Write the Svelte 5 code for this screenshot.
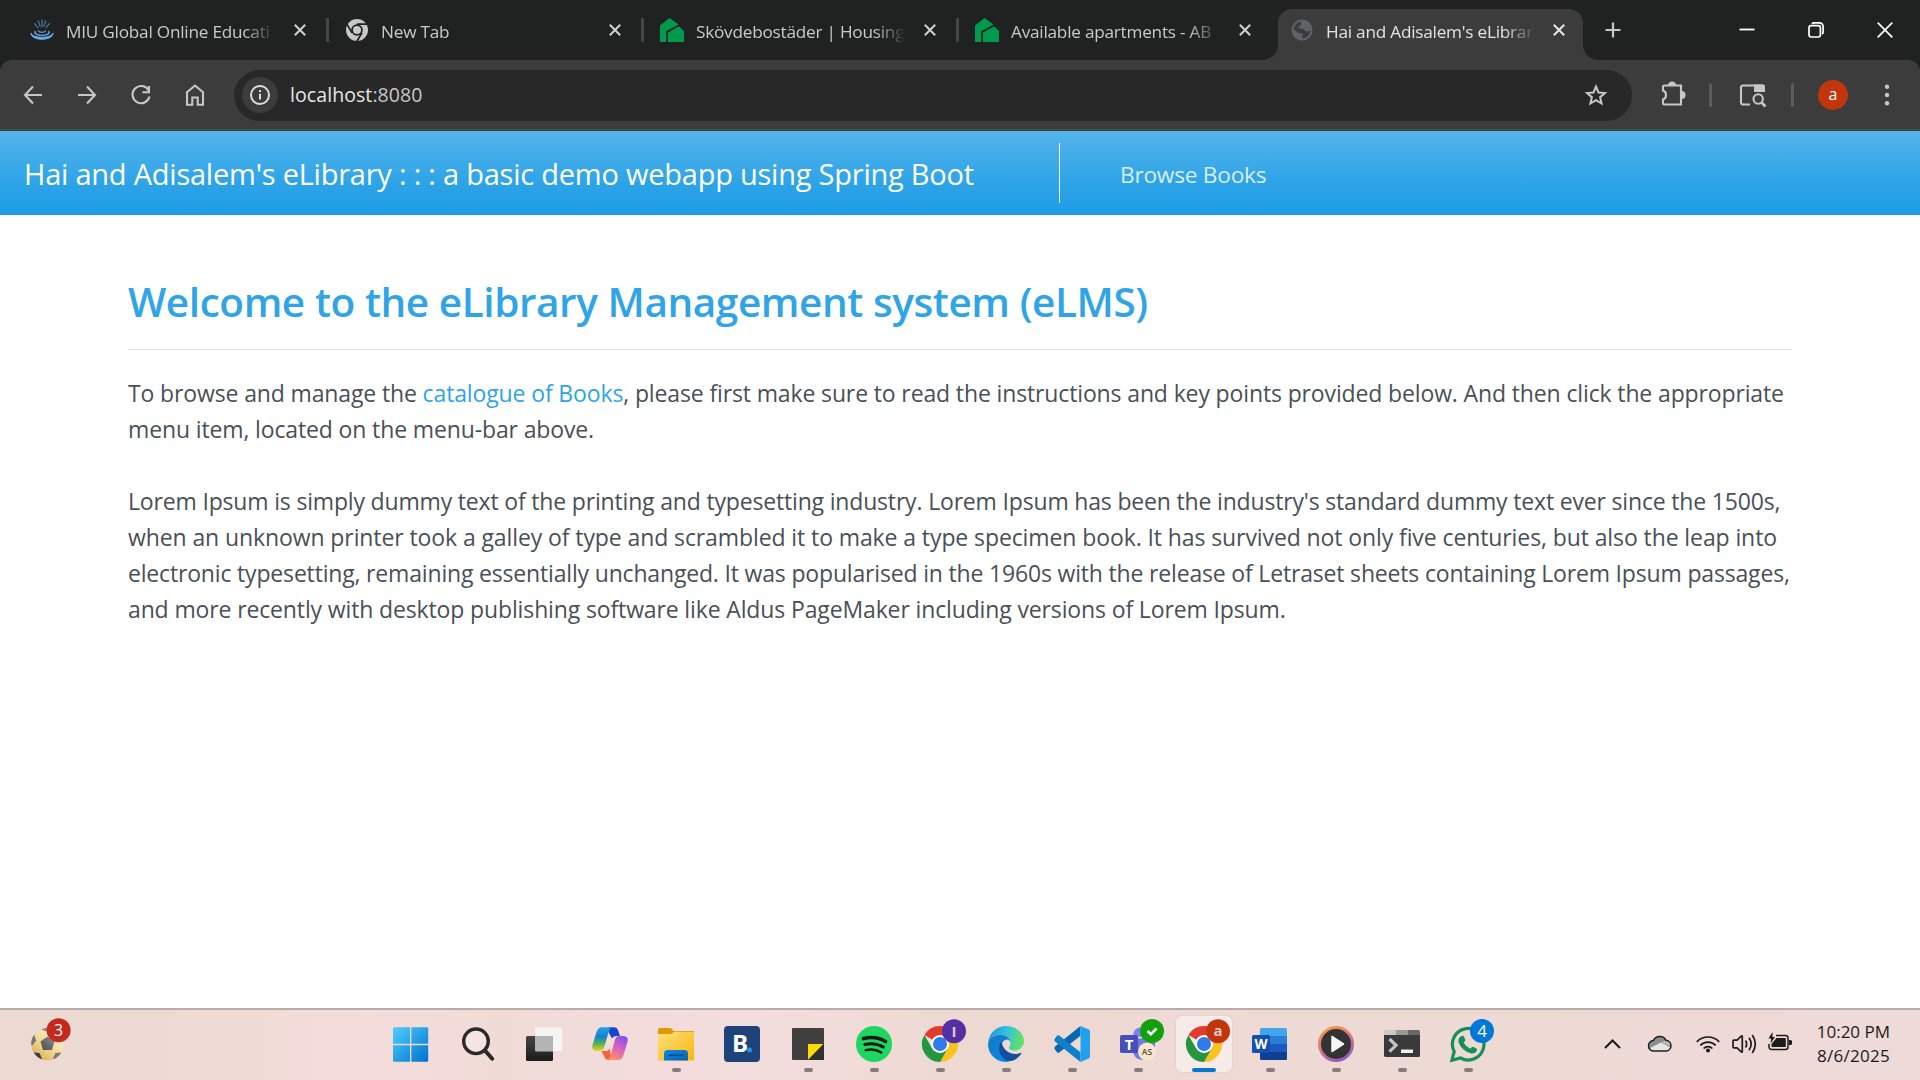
<script>
  const tabs = [
    { title: 'MIU Global Online Educati', icon: 'fountain', pos: 'first' },
    { title: 'New Tab', icon: 'chrome', pos: '' },
    { title: 'Skövdebostäder | Housing', icon: 'house', pos: '' },
    { title: 'Available apartments - AB', icon: 'house', pos: 'last' },
    { title: "Hai and Adisalem's eLibrar", icon: 'globe', pos: 'active' }
  ];

  const lorem = [
    { cls: 'snug', text: "Lorem Ipsum is simply dummy text of the printing and typesetting industry. Lorem Ipsum has been the industry's standard dummy text ever since the 1500s," },
    { cls: 'wide', text: 'when an unknown printer took a galley of type and scrambled it to make a type specimen book. It has survived not only five centuries, but also the leap into' },
    { cls: 'snug', text: 'electronic typesetting, remaining essentially unchanged. It was popularised in the 1960s with the release of Letraset sheets containing Lorem Ipsum passages,' },
    { cls: 'mid', text: 'and more recently with desktop publishing software like Aldus PageMaker including versions of Lorem Ipsum.' }
  ];

  const apps = [
    { id: 'windows', running: false },
    { id: 'search', running: false },
    { id: 'taskview', running: false },
    { id: 'copilot', running: false },
    { id: 'explorer', running: true },
    { id: 'booking', running: false },
    { id: 'sticky', running: true },
    { id: 'spotify', running: true },
    { id: 'chromeI', running: true },
    { id: 'edge', running: true },
    { id: 'vscode', running: true },
    { id: 'teams', running: true },
    { id: 'chromeA', running: true, focused: true },
    { id: 'word', running: true },
    { id: 'media', running: true },
    { id: 'terminal', running: true },
    { id: 'whatsapp', running: true }
  ];
</script>

{#snippet chromeLogo()}
  <path d="M18 18 2.4 9A18 18 0 0 1 33.6 9L18 9Z" fill="#e33b2e" />
  <path d="M18 9H33.6A18 18 0 0 1 18 36L25.8 22.5Z" fill="#fcc31e" />
  <path d="M2.4 9A18 18 0 0 0 18 36L25.8 22.5 18 27 10.2 22.5Z" fill="#25963f" />
  <circle cx="18" cy="18" r="9" fill="#fff" />
  <circle cx="18" cy="18" r="7" fill="#2f7bed" />
{/snippet}

{#snippet closeX()}
  <svg class="close" viewBox="0 0 12 12"><path d="M.8.8 11.2 11.2M11.2.8.8 11.2" /></svg>
{/snippet}

<div class="screen">
  <header class="strip">
    <div class="tabs">
      {#each tabs as tab}
        <div class="tab {tab.pos}">
          <svg class="favicon" viewBox="0 0 24 24">
            {#if tab.icon === 'fountain'}
              <g fill="none" stroke="#5b9fd8" stroke-linecap="round">
                <path d="M12 1.500V9M8.200 2.800l2 5.500M15.800 2.800l-2 5.500M4.600 5.600l3.400 4M19.400 5.600l-3.400 4" stroke-width="1.100" opacity=".75" />
                <path d="M8.500 13c1 1.800 6 1.800 7 0" stroke-width="1.500" />
                <path d="M5 13.500c-1.600 5.200 15.600 5.200 14 0" stroke-width="1.400" stroke="#66aeea" />
              </g>
              <path d="M1 15C.5 23.300 23.500 23.300 23 15c-.6 5.800-21.400 5.800-22 0Z" fill="#66aeea" stroke="#66aeea" />
            {:else if tab.icon === 'chrome'}
              <circle cx="12" cy="12" r="11" fill="#c7c7c7" />
              <circle cx="12" cy="12" r="5.800" fill="#202221" />
              <circle cx="12" cy="12" r="4" fill="#c7c7c7" />
              <path d="M12 6.200H22.500M7 14.900 1.800 5.900M17 14.900 11.800 23.500" stroke="#202221" stroke-width="1.700" />
            {:else if tab.icon === 'house'}
              <path d="M0 7.500 9.500 0 18.500 6.500 6.200 13.200V24H0Z" fill="#009a4e" />
              <path d="M8 14.500 19 8.300 24 13V24H8Z" fill="#009a4e" />
            {:else}
              <circle cx="12" cy="12" r="10.500" fill="#5f6368" />
              <path d="M12.500 3.600c-1.600.2-2 1.200-1.600 2.500.5 1.500-2.200 1.600-2.400 3-.3 1.700 2.400 1.600 4.500 1.900 2 .3 1.500 2.300 3.600 2.400 1.700.1 3.500-.3 3.900-1.600C20 17 17 20.400 12.600 20.500c-.9-1.600.3-2.500.2-3.900-.1-1.500-2.800-1-4.700-1.800-1.600-.7-1.800-2.600-4.500-3C3.800 7.400 7.600 3.400 12.500 3.600Z" fill="#393b3e" />
              <path d="M15 4.300c2.300 1 4.200 2.900 4.900 5.400-1.800-.4-2.400 1-3.900.1-1.200-.8-.1-1.800-1.700-2.400-1.400-.6-.6-2.200.7-3.100Z" fill="#5f6368" />
            {/if}
          </svg>
          <span class="title">{tab.title}</span>
          {@render closeX()}
        </div>
      {/each}
    </div>
    <svg class="plus" viewBox="0 0 16 16"><path d="M8 .5v15M.5 8h15" /></svg>
    <div class="controls">
      <svg viewBox="0 0 16 16"><path d="M.5 7.500h15" stroke-width="1.800" /></svg>
      <svg viewBox="0 0 16 16"><rect x="1" y="3.600" width="11.400" height="11.400" rx="2.200" /><path d="M4 1.900Q4.600.9 6 .9h5Q15.100.9 15.100 5v5q0 1.500-1 2.100" /></svg>
      <svg viewBox="0 0 16 16"><path d="M.7.700 15.300 15.300M15.300.7.700 15.300" /></svg>
    </div>
  </header>

  <div class="toolwrap">
    <div class="toolbar">
      <svg class="tool" viewBox="0 0 24 24"><path d="M21 12H4.500M12 3.500 4 12l8 8.500" /></svg>
      <svg class="tool" viewBox="0 0 24 24"><path d="M3 12h16.500M12 3.500 20 12l-8 8.500" /></svg>
      <svg class="tool" viewBox="0 0 24 24"><path d="M19.700 7.500A8.600 8.600 0 1 0 20.500 13.500M20 3v6.300h-6.600" /></svg>
      <svg class="tool" viewBox="0 0 24 24"><path d="M4 21.700V9.200L12 2.500l8 6.700v12.500h-5.300v-7.200H9.300v7.200Z" /></svg>
      <div class="omnibox">
        <span class="info">
          <svg viewBox="0 0 22 22"><circle cx="11" cy="11" r="9" /><path d="M11 9.800v5.700M11 6v2.100" /></svg>
        </span>
        <span class="url">localhost<b>:8080</b></span>
        <svg class="star" viewBox="0 0 24 24"><path d="m12 3.500 2.500 6 6.500.5-4.900 4.200 1.500 6.300-5.600-3.400-5.600 3.400 1.500-6.300L3 10l6.500-.5Z" /></svg>
      </div>
      <svg class="tool puzzle" viewBox="0 0 26 26"><path d="M4 4.500h17v19H4a1.500 1.500 0 0 1-1-1.500v-3.500c4-1 4-8 0-9V6a1.500 1.500 0 0 1 1-1.500Z" /><path d="M9 4a3 3 0 0 1 6 0ZM22 11a3 3 0 0 1 0 6Z" class="solid" /><path d="M9 4.500a3 3 0 0 1 6 0M21.500 11a3 3 0 0 1 0 6" /></svg>
      <i class="sep"></i>
      <svg class="tool lens" viewBox="0 0 27 24"><path d="M11 21.500H4A2 2 0 0 1 2 19.500v-15a2 2 0 0 1 2-2h20" /><path d="M15 1.500h9.500A1.800 1.800 0 0 1 26 3.200V9H15Z" class="solid" /><circle cx="19.200" cy="16" r="4.700" /><path d="m22.500 19.500 4 4" stroke-width="2.600" /></svg>
      <i class="sep"></i>
      <span class="avatar">a</span>
      <svg class="tool dots" viewBox="0 0 24 24"><circle cx="12" cy="3.700" r="2.200" /><circle cx="12" cy="12" r="2.200" /><circle cx="12" cy="20.300" r="2.200" /></svg>
    </div>
  </div>

  <nav class="navbar">
    <span class="brand">Hai and Adisalem's eLibrary : : : a basic demo webapp using Spring Boot</span>
    <span class="rule"></span>
    <span class="navlink">Browse Books</span>
  </nav>

  <main>
    <h1>Welcome to the eLibrary Management system (eLMS)</h1>
    <p>
      <span class="line mid">To browse and manage the <a href="#books">catalogue of Books</a>, please first make sure to read the instructions and key points provided below. And then click the appropriate</span>
      <span class="line mid">menu item, located on the menu-bar above.</span>
    </p>
    <p>
      {#each lorem as l}<span class="line {l.cls}">{l.text}</span>{/each}
    </p>
  </main>

  <footer class="taskbar">
    <svg class="widget" viewBox="0 0 42 44">
      <defs>
        <linearGradient id="ball" x1="0" y1="1" x2=".8" y2="0"><stop offset="0" stop-color="#cf9c3e" /><stop offset=".5" stop-color="#f0d794" /><stop offset="1" stop-color="#fffbe8" /></linearGradient>
        <linearGradient id="patch" x1="0" y1="1" x2="1" y2="0"><stop offset="0" stop-color="#4c4c4c" /><stop offset="1" stop-color="#8d8d8d" /></linearGradient>
        <clipPath id="ballclip"><circle cx="17.500" cy="26" r="16.300" /></clipPath>
      </defs>
      <g clip-path="url(#ballclip)">
        <rect y="9" width="35" height="35" fill="url(#ball)" />
        <path d="m17.500 18.500 7 5-2.500 8.500h-9L10.500 23.500Z" fill="url(#patch)" />
        <path d="M0 15.500l4 .5 2 6.500L3 27H0Z" fill="#777" />
        <path d="M3.500 34.500l6 .5 2.500 6-2 3Z" fill="#3f3f3f" />
        <path d="M32 34.500l-6.500.5-2.500 5.500 2 3 8-5Z" fill="#777" />
        <path d="M11 11.500l5.500 2 5-2-4-2.500Z" fill="#888" />
      </g>
      <circle cx="28.600" cy="12.300" r="12" fill="#c4291d" />
      <text x="28.600" y="18" class="badge">3</text>
    </svg>

    <div class="apps">
      {#each apps as app}
        <div class="app" class:focused={app.focused}>
          <svg class="appicon" viewBox="0 0 36 36">
            {#if app.id === 'windows'}
              <defs><linearGradient id="win" gradientUnits="userSpaceOnUse" x1="-1" y1="1" x2="34" y2="36"><stop offset="0" stop-color="#4fd0fd" /><stop offset="1" stop-color="#0071d2" /></linearGradient></defs>
              <path d="M-1 2.500q0-1.200 1.200-1.200H16v16.400H-1ZM17.300 1.300H33q1.200 0 1.200 1.200v15.200H17.300ZM-1 19.200H16v16.600H.2Q-1 35.800-1 34.600ZM17.300 19.200h16.900v15.400q0 1.200-1.200 1.200H17.300Z" fill="url(#win)" />
            {:else if app.id === 'search'}
              <circle cx="16" cy="15.300" r="12.300" fill="#fff" fill-opacity=".25" stroke="#2a2a2a" stroke-width="3.400" />
              <path d="m25 24.500 7.200 8.200" stroke="#2a2a2a" stroke-width="4" stroke-linecap="round" />
            {:else if app.id === 'taskview'}
              <defs><linearGradient id="tv" x1="0" y1="0" x2="0" y2="1"><stop offset="0" stop-color="#454545" /><stop offset="1" stop-color="#1c1c1c" /></linearGradient></defs>
              <rect x="0" y="10" width="27" height="25" rx="1.500" fill="url(#tv)" />
              <rect x="9" y="1.300" width="27" height="24" rx="1.500" fill="#f4f4f4" />
              <path d="M9 10h18v15.300H10.500A1.500 1.500 0 0 1 9 23.800Z" fill="#b4b4b4" />
            {:else if app.id === 'copilot'}
              <defs>
                <linearGradient id="cpA" x1="0" y1="0" x2="0" y2="1"><stop offset="0" stop-color="#20a5ee" /><stop offset=".4" stop-color="#1681cf" /><stop offset=".7" stop-color="#56b257" /><stop offset="1" stop-color="#f3cf20" /></linearGradient>
                <linearGradient id="cpB" x1=".7" y1="0" x2=".2" y2="1"><stop offset="0" stop-color="#8650f0" /><stop offset=".5" stop-color="#df65b7" /><stop offset="1" stop-color="#ff985e" /></linearGradient>
              </defs>
              <path d="M16 1.200h6.500Q25 1.200 26 4l2 6h-4q-3 0-4 2.500L17 7Z" fill="#1746cc" />
              <path d="M20 34h-3.500q-3 0-4-3L9.500 25H14q2.500 0 3.500-2.500Z" fill="#f26538" />
              <path d="M10 1.200h10q-2 0-3 3.500l-4.800 16.500Q11 25 7 25H5q-6 0-4.500-6L4.500 6Q6 1.200 10 1.200Z" fill="url(#cpA)" />
              <path d="M26 34H15q2.500 0 3.500-4L23 13.500Q24 10 28 10h3q6 0 4.500 6L31.500 29Q30 34 26 34Z" fill="url(#cpB)" />
            {:else if app.id === 'explorer'}
              <defs>
                <linearGradient id="fold" x1="0" y1="0" x2="1" y2="1"><stop offset="0" stop-color="#ffdf7d" /><stop offset="1" stop-color="#f9b70b" /></linearGradient>
                <linearGradient id="foldb" x1="0" y1="0" x2="1" y2="1"><stop offset="0" stop-color="#128bdb" /><stop offset="1" stop-color="#0860b4" /></linearGradient>
              </defs>
              <path d="M0 3.500Q0 2 1.500 2h10q1.500 0 2.500 1.200L15.500 5H36v5H0Z" fill="#dd9a05" />
              <path d="M0 8h12.500q1.500 0 2.500-1.300l.8-1h20.200V34.500H0Z" fill="url(#fold)" />
              <path d="M6 34.500V27.500Q6 24 9.500 24h17q3.500 0 3.500 3.500v7Z" fill="url(#foldb)" />
              <path d="M11 29.300h14" stroke="#064b8e" stroke-width="1.600" stroke-linecap="round" />
            {:else if app.id === 'booking'}
              <rect x="0" y="0" width="36" height="36" rx="4" fill="#1e437a" />
              <text x="8" y="25.800" class="bk">B</text>
              <circle cx="25.500" cy="24" r="2.500" fill="#119ade" />
            {:else if app.id === 'sticky'}
              <path d="M2 3q0-1 1-1h30q1 0 1 1v31H3q-1 0-1-1Z" fill="#404040" />
              <path d="M18 18h15.500L18 34Z" fill="#fddb00" />
              <path d="M33.500 18 18 34h16V18Z" fill="#303030" />
            {:else if app.id === 'spotify'}
              <circle cx="18" cy="18" r="18" fill="#1ed760" />
              <g fill="none" stroke="#151a17" stroke-linecap="round"><path d="M7.500 12.500q12.500-3 22 3" stroke-width="3.700" /><path d="M8.800 18.500q10.200-2.600 18.500 2.600" stroke-width="3" /><path d="M9.800 24.200q8.500-2.200 15.400 2.200" stroke-width="2.400" /></g>
            {:else if app.id === 'chromeI'}
              {@render chromeLogo()}
              <circle cx="32" cy="5.200" r="12" fill="#5530a5" />
              <text x="32" y="10.500" class="badge soft">I</text>
            {:else if app.id === 'edge'}
              <defs>
                <linearGradient id="edA" x1="0" y1=".3" x2="1" y2=".5"><stop offset="0" stop-color="#1f93d8" /><stop offset=".5" stop-color="#33c3dc" /><stop offset="1" stop-color="#67e35a" /></linearGradient>
                <linearGradient id="edB" x1="0" y1="0" x2=".6" y2="1"><stop offset="0" stop-color="#1579c6" /><stop offset="1" stop-color="#0a86e0" /></linearGradient>
              </defs>
              <path d="M0 17C1 7 8.500 0 18 0c10 0 18 7 18 15.500 0 5.500-4.500 9-9.500 9-3.500 0-5.500-1.200-5.500-2.500 0-1.200 1.500-1.800 1.500-5 0-3.500-4-8-10.500-8C6 9 1.500 12.500 0 17Z" fill="url(#edA)" />
              <path d="M0 18C1 12 6.500 9 12 9c6 0 10.500 3.500 10.500 8 0-2.500-2.500-3.800-4.500-3.300-3.500 1-5 4.500-4.500 8.300.8 6 6 8.500 8 13.500C9.500 38 0 29 0 18Z" fill="url(#edB)" />
              <path d="M14 14.800C10.500 19 10 25 13.500 30c2.500 3.600 6.500 5.600 9.500 5 4.500-1 8-3.800 10.200-7.200.5-.8-.3-1.300-1-.9-2.200 1-5.700 1.600-9.200.4-5.500-1.800-9.500-6.800-9-12.500Z" fill="#124f9c" />
            {:else if app.id === 'vscode'}
              <path d="M1 23.500Q-.5 22 1 20.500L26.500 0v9.700L5.200 26.500q-1 .7-2 0Z" fill="#0868b0" />
              <path d="M1 12.500q-1.500 1.500 0 3L26.500 36v-9.700L5.200 9.500q-1-.7-2 0Z" fill="#0e7fc8" />
              <path d="M26.500 0 34.800 3.600Q36 4.200 36 5.500v25q0 1.300-1.200 1.900L26.500 36Z" fill="#22a1ee" />
            {:else if app.id === 'teams'}
              <circle cx="20" cy="8" r="6.500" fill="#7b83eb" />
              <path d="M13 12h22v10q0 12-11 12-11 0-11-11Z" fill="#7078e2" />
              <path d="M17 11.500h13" stroke="#f3e9f2" stroke-width="1.600" />
              <rect x="0" y="9" width="18" height="18" rx="1.800" fill="#474fb8" />
              <text x="9" y="23.600" class="tt">T</text>
              <circle cx="32" cy="5" r="12" fill="#12a010" />
              <path d="m27.500 5 3.300 3.200 5.800-5.700" stroke="#fff" stroke-width="2.600" fill="none" />
              <circle cx="27" cy="25.600" r="9" fill="#f7e7cd" />
              <text x="27" y="28.500" class="initials">AS</text>
            {:else if app.id === 'chromeA'}
              {@render chromeLogo()}
              <circle cx="32" cy="5.200" r="12" fill="#c1360c" />
              <text x="32" y="10" class="badge soft">a</text>
            {:else if app.id === 'word'}
              <path d="M8 3.500Q8 2 9.500 2h24Q35 2 35 3.500V10H8Z" fill="#41a5ee" />
              <path d="M8 10h27v8H8Z" fill="#2b7cd3" />
              <path d="M8 18h27v8H8Z" fill="#185abd" />
              <path d="M8 26h27v6.500q0 1.500-1.500 1.500h-24Q8 34 8 32.500Z" fill="#103f91" />
              <rect x="0" y="9" width="18" height="18" rx="1.500" fill="#1450b0" />
              <text x="9" y="23" class="ww">W</text>
            {:else if app.id === 'media'}
              <defs><linearGradient id="med" x1=".2" y1="0" x2=".7" y2="1"><stop offset="0" stop-color="#ff9b45" /><stop offset=".5" stop-color="#d47586" /><stop offset="1" stop-color="#8958c4" /></linearGradient></defs>
              <circle cx="18" cy="18" r="18" fill="url(#med)" />
              <circle cx="18" cy="18" r="15" fill="#333" />
              <path d="M14 10.500v15L25.500 18Z" fill="#f5f5f5" stroke="#f5f5f5" stroke-width="1.500" stroke-linejoin="round" />
            {:else if app.id === 'terminal'}
              <path d="M0 5.500Q0 4 1.500 4H12v5H0Z" fill="#c9c9c9" />
              <path d="M12 4h12v5H12Z" fill="#989898" />
              <path d="M24 4h10.500Q36 4 36 5.500V9H24Z" fill="#686868" />
              <path d="M0 9h36v20.500q0 1.500-1.500 1.500h-33Q0 31 0 29.500Z" fill="#3a3a3a" />
              <path d="m5.500 13 6.500 6.300-6.500 6.300" fill="none" stroke="#c4c4c4" stroke-width="3.200" />
              <rect x="17" y="23.500" width="12" height="3.500" fill="#f2f2f2" />
            {:else}
              <path d="M2 34.200 4.200 25.500A15.800 15.800 0 1 1 10.500 32Z" fill="none" stroke="#178f5c" stroke-width="3.200" />
              <path d="M11.500 10q1.800-.8 2.500.8l1.300 3q.4 1-1.600 3 2.500 4.200 6.600 6 1.800-2.300 2.700-2l3.500 1.700q1 .7.200 2.500-2 3.300-6 2.300-9-2.500-12-10.500-1.300-4.500 2.800-6.800Z" fill="#178f5c" />
              <circle cx="32" cy="5" r="12" fill="#0078d7" />
              <text x="32" y="11.200" class="badge four">4</text>
            {/if}
          </svg>
          {#if app.running}<i class="pill"></i>{/if}
        </div>
      {/each}
    </div>

    <div class="tray">
      <svg class="chev" viewBox="0 0 17 10"><path d="m1 9 7.500-7.500L16 9" /></svg>
      <svg class="cloud" viewBox="0 0 24 17"><path d="M6 16a5.200 5.200 0 0 1-.6-10.400A7 7 0 0 1 18 5.300 5.400 5.400 0 0 1 18.500 16Z" fill="#8d8d8d" /><path d="M2 13 13 7.500 22.500 12.500Q21 16 18.500 16H6q-3 0-4-3Z" fill="#e6e6e6" /><path d="M13 7.500 18 5.300q5 .7 5 6.200Z" fill="#b9b9b9" /><path d="M6 16a5.200 5.200 0 0 1-.6-10.400A7 7 0 0 1 18 5.300 5.400 5.400 0 0 1 18.500 16Z" fill="none" stroke="#222" stroke-width="1.500" /></svg>
      <svg class="wifi" viewBox="0 0 24 18"><path d="M.8 6.800a15.500 15.500 0 0 1 22.400 0M4.300 10.300a10.700 10.700 0 0 1 15.400 0M7.700 13.500a6 6 0 0 1 8.600 0" /><circle cx="12" cy="15.500" r="2" fill="#1b1b1b" stroke="none" /></svg>
      <svg class="vol" viewBox="0 0 24 20"><path d="M1 7v6q0 .8.800.8H5l4.500 4.200q.8.500.8-.5V2.500q0-1-.8-.5L5 6.200H1.800Q1 6.200 1 7ZM13.500 6.500q2.300 3.500 0 7M17 3.800q4.300 6.200 0 12.400M20.300 1q6 9 0 18" /></svg>
      <svg class="batt" viewBox="0 0 24 19"><path d="M8 3.500h9.500A2.500 2.500 0 0 1 20 6v9a2.500 2.500 0 0 1-2.500 2.500h-14A2.500 2.500 0 0 1 1 15v-3" fill="none" stroke="#1b1b1b" stroke-width="1.500" /><path d="M8.500 6H17q.8 0 .8.800v7.500q0 .8-.8.800H4.300q-.8 0-.8-.8V12Z" fill="#1b1b1b" /><path d="M21 8h1.500q1.500 0 1.500 1.500v2q0 1.500-1.500 1.500H21ZM4.500 0 .5 6.500h2.700L2.500 11.500 7 5H4.500Z" fill="#1b1b1b" /></svg>
      <div class="clock"><span>10:20 PM</span><span class="date">8/6/2025</span></div>
    </div>
  </footer>
</div>

<style>
  :global(body) { margin: 0; background: #fff; }
  .screen { width: 1920px; height: 1080px; display: flex; flex-direction: column; overflow: hidden; background: #fff; font-family: "Open Sans", "Noto Sans", sans-serif; }
  svg { display: block; flex: none; overflow: visible; }

  .strip { height: 60px; flex: none; display: flex; align-items: center; background: #202221; box-sizing: border-box; }
  .tabs { display: flex; align-self: stretch; align-items: flex-end; padding-left: 18px; }
  .tab { position: relative; width: 305px; height: 51px; margin-right: 10px; display: flex; align-items: center; box-sizing: border-box; padding: 0 18px 9px 12px; color: #c9c9c9; }
  .tab::after { content: ""; position: absolute; right: -6px; top: 9px; width: 3px; height: 24px; border-radius: 1px; background: #454746; }
  .tab.last::after { display: none; }
  .favicon { width: 24px; height: 24px; }
  .title { width: 216px; margin-left: 12px; white-space: nowrap; font-size: 17.200px; line-height: 24px; letter-spacing: -0.230px; padding-top: 4px; -webkit-mask-image: linear-gradient(90deg, #000 178px, transparent 210px); mask-image: linear-gradient(90deg, #000 178px, transparent 210px); }
  .close { width: 12px; height: 12px; margin-left: auto; stroke: #d0d0d0; stroke-width: 2; margin-right: -1px; }
  .tab.active { margin-right: 0; background: #3c3c3c; border-radius: 14px 14px 0 0; color: #e3e3e3; }
  .tab.active::before, .tab.active::after { content: ""; display: block; position: absolute; top: auto; bottom: 0; width: 15px; height: 15px; border-radius: 0; }
  .tab.active::before { left: -15px; background: radial-gradient(circle at 0 0, transparent 14.500px, #3c3c3c 15.200px); }
  .tab.active::after { right: -15px; background: radial-gradient(circle at 100% 0, transparent 14.500px, #3c3c3c 15.200px); }
  .tab.active .close { stroke: #e6e6e6; margin-right: 0; }
  .plus { width: 16px; height: 16px; margin-left: 22px; stroke: #c7c7c7; stroke-width: 2.200; }
  .controls { margin-left: auto; display: flex; gap: 53px; padding-right: 27px; }
  .controls svg { width: 16px; height: 16px; fill: none; stroke: #fff; stroke-width: 1.700; }

  .toolwrap { height: 71px; flex: none; background: #202221; }
  .toolbar { height: 71px; box-sizing: border-box; border-radius: 12px 12px 0 0; background: linear-gradient(#3c3c3c 69px, #4b4b4b 69px, #4b4b4b 70px, #3c3c3c 70px); display: flex; align-items: center; padding: 0 21px; }
  .tool { width: 24px; height: 24px; margin: 0 30px 2px 0; fill: none; stroke: #c7c7c7; stroke-width: 2.100; }
  .solid { fill: #c7c7c7; stroke: none; }
  .omnibox { width: 1398px; height: 51px; margin: -1px 28px 0 -3px; border-radius: 26px; background: #282828; display: flex; align-items: center; box-sizing: border-box; padding: 0 24px 0 8px; }
  .info { width: 36px; height: 36px; border-radius: 50%; background: #3c3c3c; display: grid; place-items: center; }
  .info svg { width: 22px; height: 22px; fill: none; stroke: #dcdcdc; stroke-width: 2; }
  .url { margin-left: 12px; font-size: 19.500px; line-height: 28px; letter-spacing: 0.080px; color: #e6e6e6; }
  .url b { font-weight: 400; color: #c7c7c7; }
  .star { width: 24px; height: 24px; margin-left: auto; fill: none; stroke: #c7c7c7; stroke-width: 2; }
  .puzzle { width: 26px; height: 26px; margin: 0 23px 3px 0; }
  .sep { width: 3px; height: 24px; margin-bottom: 1px; border-radius: 2px; background: #5c5c5c; flex: none; }
  .lens { width: 27px; margin: 0 25px 1px 27px; }
  .avatar { width: 30px; height: 30px; margin: 0 27px 1px 24px; border-radius: 50%; background: #c1360c; color: #fff; font-size: 16px; line-height: 28px; text-align: center; flex: none; }
  .dots { fill: #c7c7c7; stroke: none; margin: 0 0 1px; }

  .navbar { height: 84px; flex: none; display: flex; align-items: center; box-sizing: border-box; padding-left: 24px; background: linear-gradient(#54b4eb, #2fa4e7 60%, #1d9ce5); color: #fff; white-space: nowrap; }
  .brand { width: 1035px; font-size: 29px; line-height: 42px; padding-top: 2px; letter-spacing: -0.230px; }
  .rule { width: 1px; height: 60px; background: #fff; }
  .navlink { margin-left: 60px; padding-top: 3px; font-size: 22.700px; line-height: 36px; letter-spacing: -0.250px; color: #d8eefb; }

  main { flex: 1; padding: 62px 128px 0; color: #495057; }
  h1 { margin: 0 0 25px; height: 73px; box-sizing: border-box; border-bottom: 1px solid #e1e1e1; font-size: 40.500px; font-weight: 600; line-height: 50px; letter-spacing: -0.420px; color: #2fa4e7; white-space: nowrap; }
  p { margin: 0 0 36px; font-size: 23px; line-height: 36px; }
  .line { display: block; white-space: nowrap; }
  .mid { letter-spacing: -0.133px; }
  .snug { letter-spacing: -0.174px; }
  .wide { letter-spacing: -0.098px; }
  a { color: #2fa4e7; text-decoration: none; }

  .taskbar { position: relative; height: 72px; flex: none; box-sizing: border-box; border-top: 2px solid #b9abaa; display: flex; background: linear-gradient(90deg, #ecd9d2 0, #eedad4 8%, #f4dcda 19%, #f1dbd7 26%, #f4dddd 39%, #ecd9d1 52%, #efdad5 62%, #eddad4 76%, #eed9d6 90%, #eedbd9 100%); }
  .widget { width: 42px; height: 44px; margin: 8px 0 0 30px; }
  .badge { font-size: 16px; fill: #fff; text-anchor: middle; }
  .soft { font-size: 15px; font-weight: 700; fill: #e3c6c8; }
  .four { font-size: 17px; }
  .bk { font-size: 24px; font-weight: 700; fill: #fff; }
  .tt { font-size: 15px; font-weight: 700; fill: #fff; text-anchor: middle; }
  .ww { font-size: 13.500px; font-weight: 700; fill: #fff; text-anchor: middle; }
  .initials { font-size: 8.500px; font-weight: 600; fill: #5b4630; text-anchor: middle; }
  .apps { display: flex; margin-left: 307px; }
  .app { width: 56px; height: 56px; margin: 6px 5px 0; border-radius: 6px; display: flex; flex-direction: column; align-items: center; padding-top: 10px; box-sizing: border-box; }
  .appicon { width: 36px; height: 36px; }
  .pill { width: 9px; height: 5px; margin-top: 6px; border-radius: 3px; background: #877c7b; }
  .focused { background: #f7ebe9; box-shadow: 0 0 0 1px #e6d3d0; }
  .focused .pill { width: 24px; background: #0078d4; }

  .tray { margin-left: auto; height: 67px; padding-right: 30px; display: flex; align-items: center; }
  .tray svg { fill: none; stroke: #1b1b1b; stroke-width: 1.700; }
  .tray .chev { width: 17px; height: 10px; margin-right: 27px; stroke-width: 2; }
  .tray .cloud { width: 24px; height: 17px; margin-right: 24px; stroke: none; }
  .wifi { width: 24px; height: 18px; margin-right: 12px; }
  .vol { width: 24px; height: 20px; margin-right: 12px; }
  .tray .batt { width: 24px; height: 19px; margin: 0 25px 4px 0; stroke: none; }
  .clock { display: flex; flex-direction: column; align-items: flex-end; font-size: 17px; line-height: 24px; color: #1b1b1b; }
  .date { letter-spacing: 0.270px; }
</style>
